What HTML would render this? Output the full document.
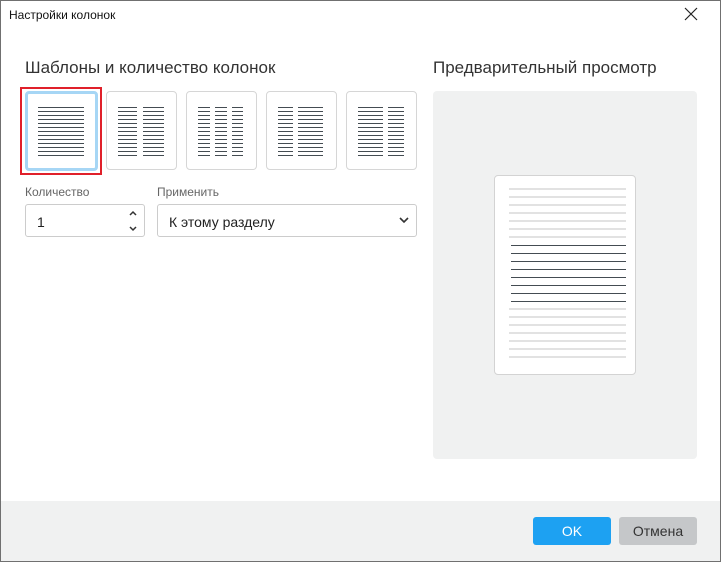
<!DOCTYPE html>
<html><head><meta charset="utf-8"><style>
*{box-sizing:border-box;margin:0;padding:0}
body{width:722px;height:562px;overflow:hidden;background:#fff;font-family:"Liberation Sans","DejaVu Sans",sans-serif;position:relative;color:#222}
.win{position:absolute;left:0;top:0;width:721px;height:562px;border:1px solid #707070;}
.a{position:absolute}
.btn{position:absolute;top:91px;width:71px;height:79px;border:1px solid #d6d6d6;border-radius:4px;background:#fff}
.ln{position:absolute;top:107px;height:50px;background:repeating-linear-gradient(to bottom,#444c52 0,#444c52 1px,transparent 1px,transparent 4px)}
.lbl{font-size:12px;color:#666}
.inp{position:absolute;border:1px solid #ccc;border-radius:3px;height:33px;font-size:14px;line-height:35px;padding-left:11px;color:#222}
.pl{position:absolute;left:509px;width:117px;height:2px;background:#e2e2e2}
.pd{position:absolute;left:511px;width:115px;height:1px;background:#444c52}
</style></head><body>
<div class="win"></div>
<div class="a" style="left:9px;top:8px;font-size:12px;color:#111">Настройки колонок</div>
<svg class="a" style="left:684px;top:7px" width="14" height="14"><path d="M1 1L13 13M13 1L1 13" stroke="#222" stroke-width="1.2"/></svg>
<div class="a" style="left:25px;top:58px;font-size:17px;color:#333">Шаблоны и количество колонок</div>
<div class="a" style="left:433px;top:58px;font-size:17px;color:#333">Предварительный просмотр</div>

<div class="a" style="left:20px;top:87px;width:82px;height:88px;border:2px solid #e0202a"></div>
<div class="btn" style="left:25px;top:91px;width:73px;height:80px;border:3px solid #a6d6f5"></div>
<div class="ln" style="left:38px;width:46px"></div>

<div class="btn" style="left:106px"></div>
<div class="ln" style="left:118px;width:19px"></div><div class="ln" style="left:143px;width:21px"></div>
<div class="btn" style="left:186px"></div>
<div class="ln" style="left:198px;width:12px"></div><div class="ln" style="left:215px;width:12px"></div><div class="ln" style="left:232px;width:11px"></div>
<div class="btn" style="left:266px"></div>
<div class="ln" style="left:278px;width:15px"></div><div class="ln" style="left:298px;width:25px"></div>
<div class="btn" style="left:346px"></div>
<div class="ln" style="left:358px;width:25px"></div><div class="ln" style="left:388px;width:16px"></div>

<div class="a lbl" style="left:25px;top:185px">Количество</div>
<div class="a lbl" style="left:157px;top:185px">Применить</div>
<div class="inp" style="left:25px;top:204px;width:120px">1</div>
<svg class="a" style="left:128px;top:208px" width="10" height="26"><path d="M2 7L5 4L8 7M2 19L5 22L8 19" stroke="#333" stroke-width="1.5" fill="none"/></svg>
<div class="inp" style="left:157px;top:204px;width:260px">К этому разделу</div>
<svg class="a" style="left:399px;top:216px" width="10" height="8"><path d="M1 2L5 6L9 2" stroke="#333" stroke-width="1.6" fill="none"/></svg>

<div class="a" style="left:433px;top:91px;width:264px;height:368px;background:#f0f1f1;border-radius:4px"></div>
<div class="a" style="left:494px;top:175px;width:142px;height:200px;background:#fff;border:1px solid #d3d3d3;border-radius:4px"></div>
<div class="pl" style="top:188px"></div><div class="pl" style="top:196px"></div><div class="pl" style="top:204px"></div><div class="pl" style="top:212px"></div><div class="pl" style="top:220px"></div><div class="pl" style="top:228px"></div><div class="pl" style="top:236px"></div>
<div class="pd" style="top:245px"></div><div class="pd" style="top:253px"></div><div class="pd" style="top:261px"></div><div class="pd" style="top:269px"></div><div class="pd" style="top:277px"></div><div class="pd" style="top:285px"></div><div class="pd" style="top:293px"></div><div class="pd" style="top:301px"></div>
<div class="pl" style="top:308px"></div><div class="pl" style="top:316px"></div><div class="pl" style="top:324px"></div><div class="pl" style="top:332px"></div><div class="pl" style="top:340px"></div><div class="pl" style="top:348px"></div><div class="pl" style="top:356px"></div>

<div class="a" style="left:1px;top:501px;width:719px;height:60px;background:#f0f1f1"></div>
<div class="a" style="left:533px;top:517px;width:78px;height:28px;background:#1da1f2;border-radius:3px;color:#fff;font-size:14px;text-align:center;line-height:28px">OK</div>
<div class="a" style="left:619px;top:517px;width:78px;height:28px;background:#c5c7c9;border-radius:3px;color:#333;font-size:14px;text-align:center;line-height:28px">Отмена</div>
</body></html>
